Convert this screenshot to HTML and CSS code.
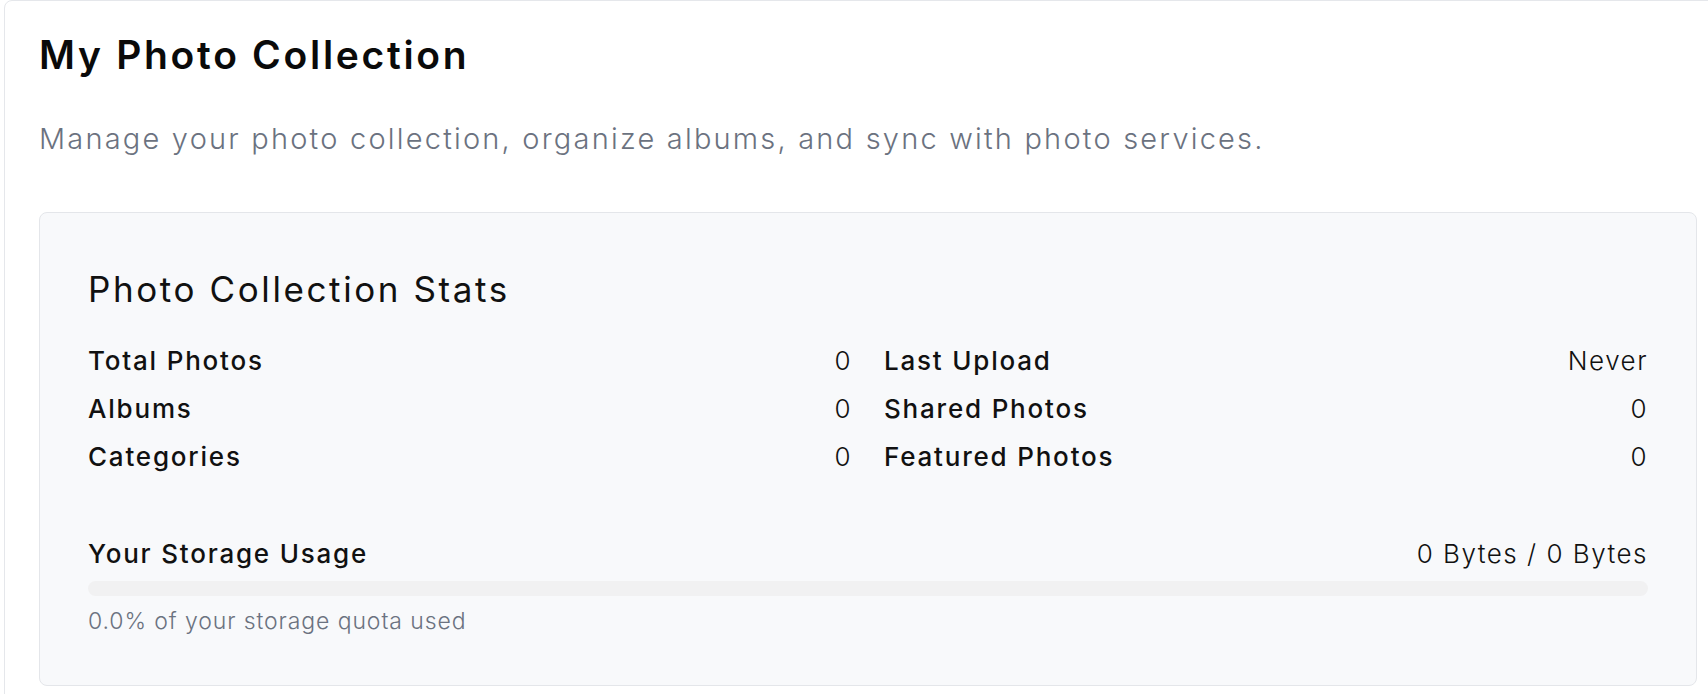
FILE: index.html
```html
<!DOCTYPE html>
<html lang="en">
<head>
<meta charset="utf-8">
<title>My Photo Collection</title>
<link rel="stylesheet" href="styles.css">
</head>
<body>
<main class="page">
  <h1 class="title">My Photo Collection</h1>
  <p class="subtitle">Manage your photo collection, organize albums, and sync with photo services.</p>
  <section class="stats-card">
    <h2 class="stats-heading">Photo Collection Stats</h2>
    <div class="stats-grid">
      <div class="stat-row"><span class="stat-label">Total Photos</span><span class="stat-value">0</span></div>
      <div class="stat-row"><span class="stat-label">Last Upload</span><span class="stat-value">Never</span></div>
      <div class="stat-row"><span class="stat-label">Albums</span><span class="stat-value">0</span></div>
      <div class="stat-row"><span class="stat-label">Shared Photos</span><span class="stat-value">0</span></div>
      <div class="stat-row"><span class="stat-label">Categories</span><span class="stat-value">0</span></div>
      <div class="stat-row"><span class="stat-label">Featured Photos</span><span class="stat-value">0</span></div>
    </div>
    <div class="storage">
      <div class="storage-head"><span class="stat-label">Your Storage Usage</span><span class="stat-value">0 Bytes / 0 Bytes</span></div>
      <div class="bar"><div class="bar-fill" style="width:0%"></div></div>
      <p class="storage-note">0.0% of your storage quota used</p>
    </div>
  </section>
</main>
</body>
</html>
```

FILE: styles.css
```css
html, body {
  margin: 0;
  padding: 0;
  background: #ffffff;
  overflow: hidden;
}
body {
  font-family: Inter, "Noto Sans", sans-serif;
  color: #111111;
}
.page {
  box-sizing: border-box;
  width: 1728px;
  margin-left: 4px;
  border: 1px solid #e5e7eb;
  border-radius: 8px;
  padding: 32px 34px 40px;
}
.title {
  margin: 0;
  font-size: 39px;
  line-height: 44px;
  font-weight: 600;
  color: #0a0a0a;
  letter-spacing: 2.7px;
}
.subtitle {
  margin: 42px 0 0;
  font-size: 29px;
  line-height: 40px;
  font-weight: 300;
  color: #6b7280;
  letter-spacing: 2.2px;
}
.stats-card {
  margin-top: 53px;
  background: #f8f9fb;
  border: 1px solid #e4e6ea;
  border-radius: 8px;
  padding: 48px 48px 48px;
}
.stats-heading {
  margin: 0;
  font-size: 35px;
  line-height: 56px;
  font-weight: 400;
  color: #111111;
  letter-spacing: 2.6px;
}
.stats-grid {
  margin-top: 26px;
  display: grid;
  grid-template-columns: 1fr 1fr;
  column-gap: 32px;
  row-gap: 12px;
}
.stat-row,
.storage-head {
  display: flex;
  justify-content: space-between;
  align-items: baseline;
  font-size: 26px;
  line-height: 36px;
}
.stat-label {
  font-weight: 500;
  color: #111111;
  letter-spacing: 1.8px;
}
.stat-value {
  font-weight: 300;
  color: #111111;
  letter-spacing: 1.5px;
}
.storage {
  margin-top: 61px;
}
.bar {
  margin-top: 9px;
  height: 15px;
  border-radius: 999px;
  background: #f1f1f2;
  overflow: hidden;
}
.bar-fill {
  height: 100%;
  background: #3b82f6;
}
.storage-note {
  margin: 9px 0 0;
  font-size: 23px;
  line-height: 32px;
  font-weight: 300;
  color: #6b7280;
  letter-spacing: 0.9px;
}
```
